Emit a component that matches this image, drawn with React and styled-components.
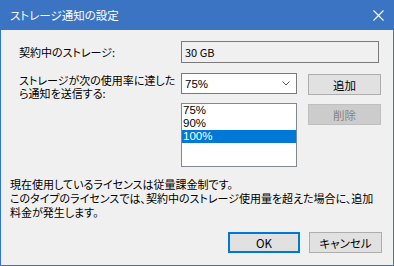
import React from 'react'
import styled, { createGlobalStyle } from 'styled-components'

const Global = createGlobalStyle`
  html, body {
    margin: 0;
    padding: 0;
    background: #f0f0f0;
  }
  * {
    box-sizing: border-box;
  }
`;

const jp = `"Noto Sans CJK JP", "Noto Sans", sans-serif`;
const latin = `"Liberation Sans", "Noto Sans", sans-serif`;

const Window = styled.div`
    width: 394px;
    height: 266px;
    background: #f0f0f0;
    border: 1px solid #3c74c4;
    border-top: none;
    display: flex;
    flex-direction: column;
    font-family: ${jp};
    font-size: 11px;
    font-feature-settings: "palt";
    color: #000;
`;

const TitleBar = styled.div`
    height: 30px;
    margin: 0 -1px;
    background: #3c74c4;
    color: #fff;
    display: flex;
    align-items: center;
    justify-content: space-between;
    padding: 0 0 0 10px;
    font-size: 11.5px;
    white-space: nowrap;
`;

const Close = styled.div`
    width: 32px;
    height: 30px;
    display: grid;
    place-items: center;
`;

const Form = styled.div`
    margin-top: 11px;
    padding-left: 18px;
    display: grid;
    grid-template-columns: 151px 116px 73px;
    grid-template-rows: 22px 20px 64px;
    column-gap: 11px;
    row-gap: 10px;
    align-items: start;
`;

const Label = styled.div`
    line-height: 13px;
    white-space: nowrap;
    align-self: ${p => p.center ? 'center' : 'start'};
    margin-top: ${p => p.top || 0}px;
`;

const ReadOnlyBox = styled.div`
    grid-column: 2 / 4;
    width: 198px;
    height: 22px;
    border: 1px solid #7a7a7a;
    background: #f0f0f0;
    padding-left: 3px;
    display: flex;
    align-items: center;
`;

const Combo = styled.div`
    height: 21px;
    border: 1px solid #7a7a7a;
    background: #fff;
    padding: 0 6px 0 3px;
    display: flex;
    align-items: center;
    justify-content: space-between;
    font-family: ${latin};
    font-size: 11.5px;
`;

const Button = styled.div`
    height: 21px;
    margin-top: ${p => p.top || 0}px;
    width: ${p => p.w || 73}px;
    background: ${p => p.disabled ? '#cccccc' : '#e1e1e1'};
    border: ${p => p.focused ? '2px solid #0078d7' : p.disabled ? '1px solid #bfbfbf' : '1px solid #adadad'};
    color: ${p => p.disabled ? '#838383' : '#000'};
    font-size: 11.5px;
    display: flex;
    align-items: center;
    justify-content: center;
    white-space: nowrap;
`;

const ListBox = styled.div`
    height: 64px;
    border: 1px solid #828790;
    background: #fff;
    display: flex;
    flex-direction: column;
    font-family: ${latin};
    font-size: 11.5px;
`;

const Item = styled.div`
    height: 13px;
    line-height: 13px;
    padding-left: 1px;
    background: ${p => p.selected ? '#0078d7' : 'transparent'};
    color: ${p => p.selected ? '#fff' : '#000'};
`;

const Info = styled.div`
    margin-top: 10px;
    padding-left: 9px;
    line-height: 14px;
    white-space: nowrap;
`;

const Footer = styled.div`
    margin-top: auto;
    padding: 0 11px 12px 0;
    display: flex;
    justify-content: flex-end;
    gap: 9px;
`;

export default function App() {
    return (
        <>
            <Global />
            <Window>
                <TitleBar>
                    <span>ストレージ通知の設定</span>
                    <Close>
                        <svg width="11" height="11" viewBox="0 0 11 11">
                            <path d="M0.5 0.5 L10.5 10.5 M10.5 0.5 L0.5 10.5" stroke="#fff" strokeWidth="1.1" />
                        </svg>
                    </Close>
                </TitleBar>
                <Form>
                    <Label center>契約中のストレージ:</Label>
                    <ReadOnlyBox>30 GB</ReadOnlyBox>

                    <Label top={1}>ストレージが次の使用率に達した<br />ら通知を送信する:</Label>
                    <Combo>
                        <span>75%</span>
                        <svg width="8" height="5" viewBox="0 0 8 5">
                            <path d="M0.5 0.5 L4 4 L7.5 0.5" stroke="#5a5a5a" strokeWidth="1" fill="none" />
                        </svg>
                    </Combo>
                    <Button top={1}>追加</Button>

                    <div />
                    <ListBox>
                        <Item>75%</Item>
                        <Item>90%</Item>
                        <Item selected>100%</Item>
                    </ListBox>
                    <Button disabled top={1}>削除</Button>
                </Form>
                <Info>
                    現在使用しているライセンスは従量課金制です。<br />
                    このタイプのライセンスでは、契約中のストレージ使用量を超えた場合に、追加<br />
                    料金が発生します。
                </Info>
                <Footer>
                    <Button focused w={72}>OK</Button>
                    <Button>キャンセル</Button>
                </Footer>
            </Window>
        </>
    )
}
